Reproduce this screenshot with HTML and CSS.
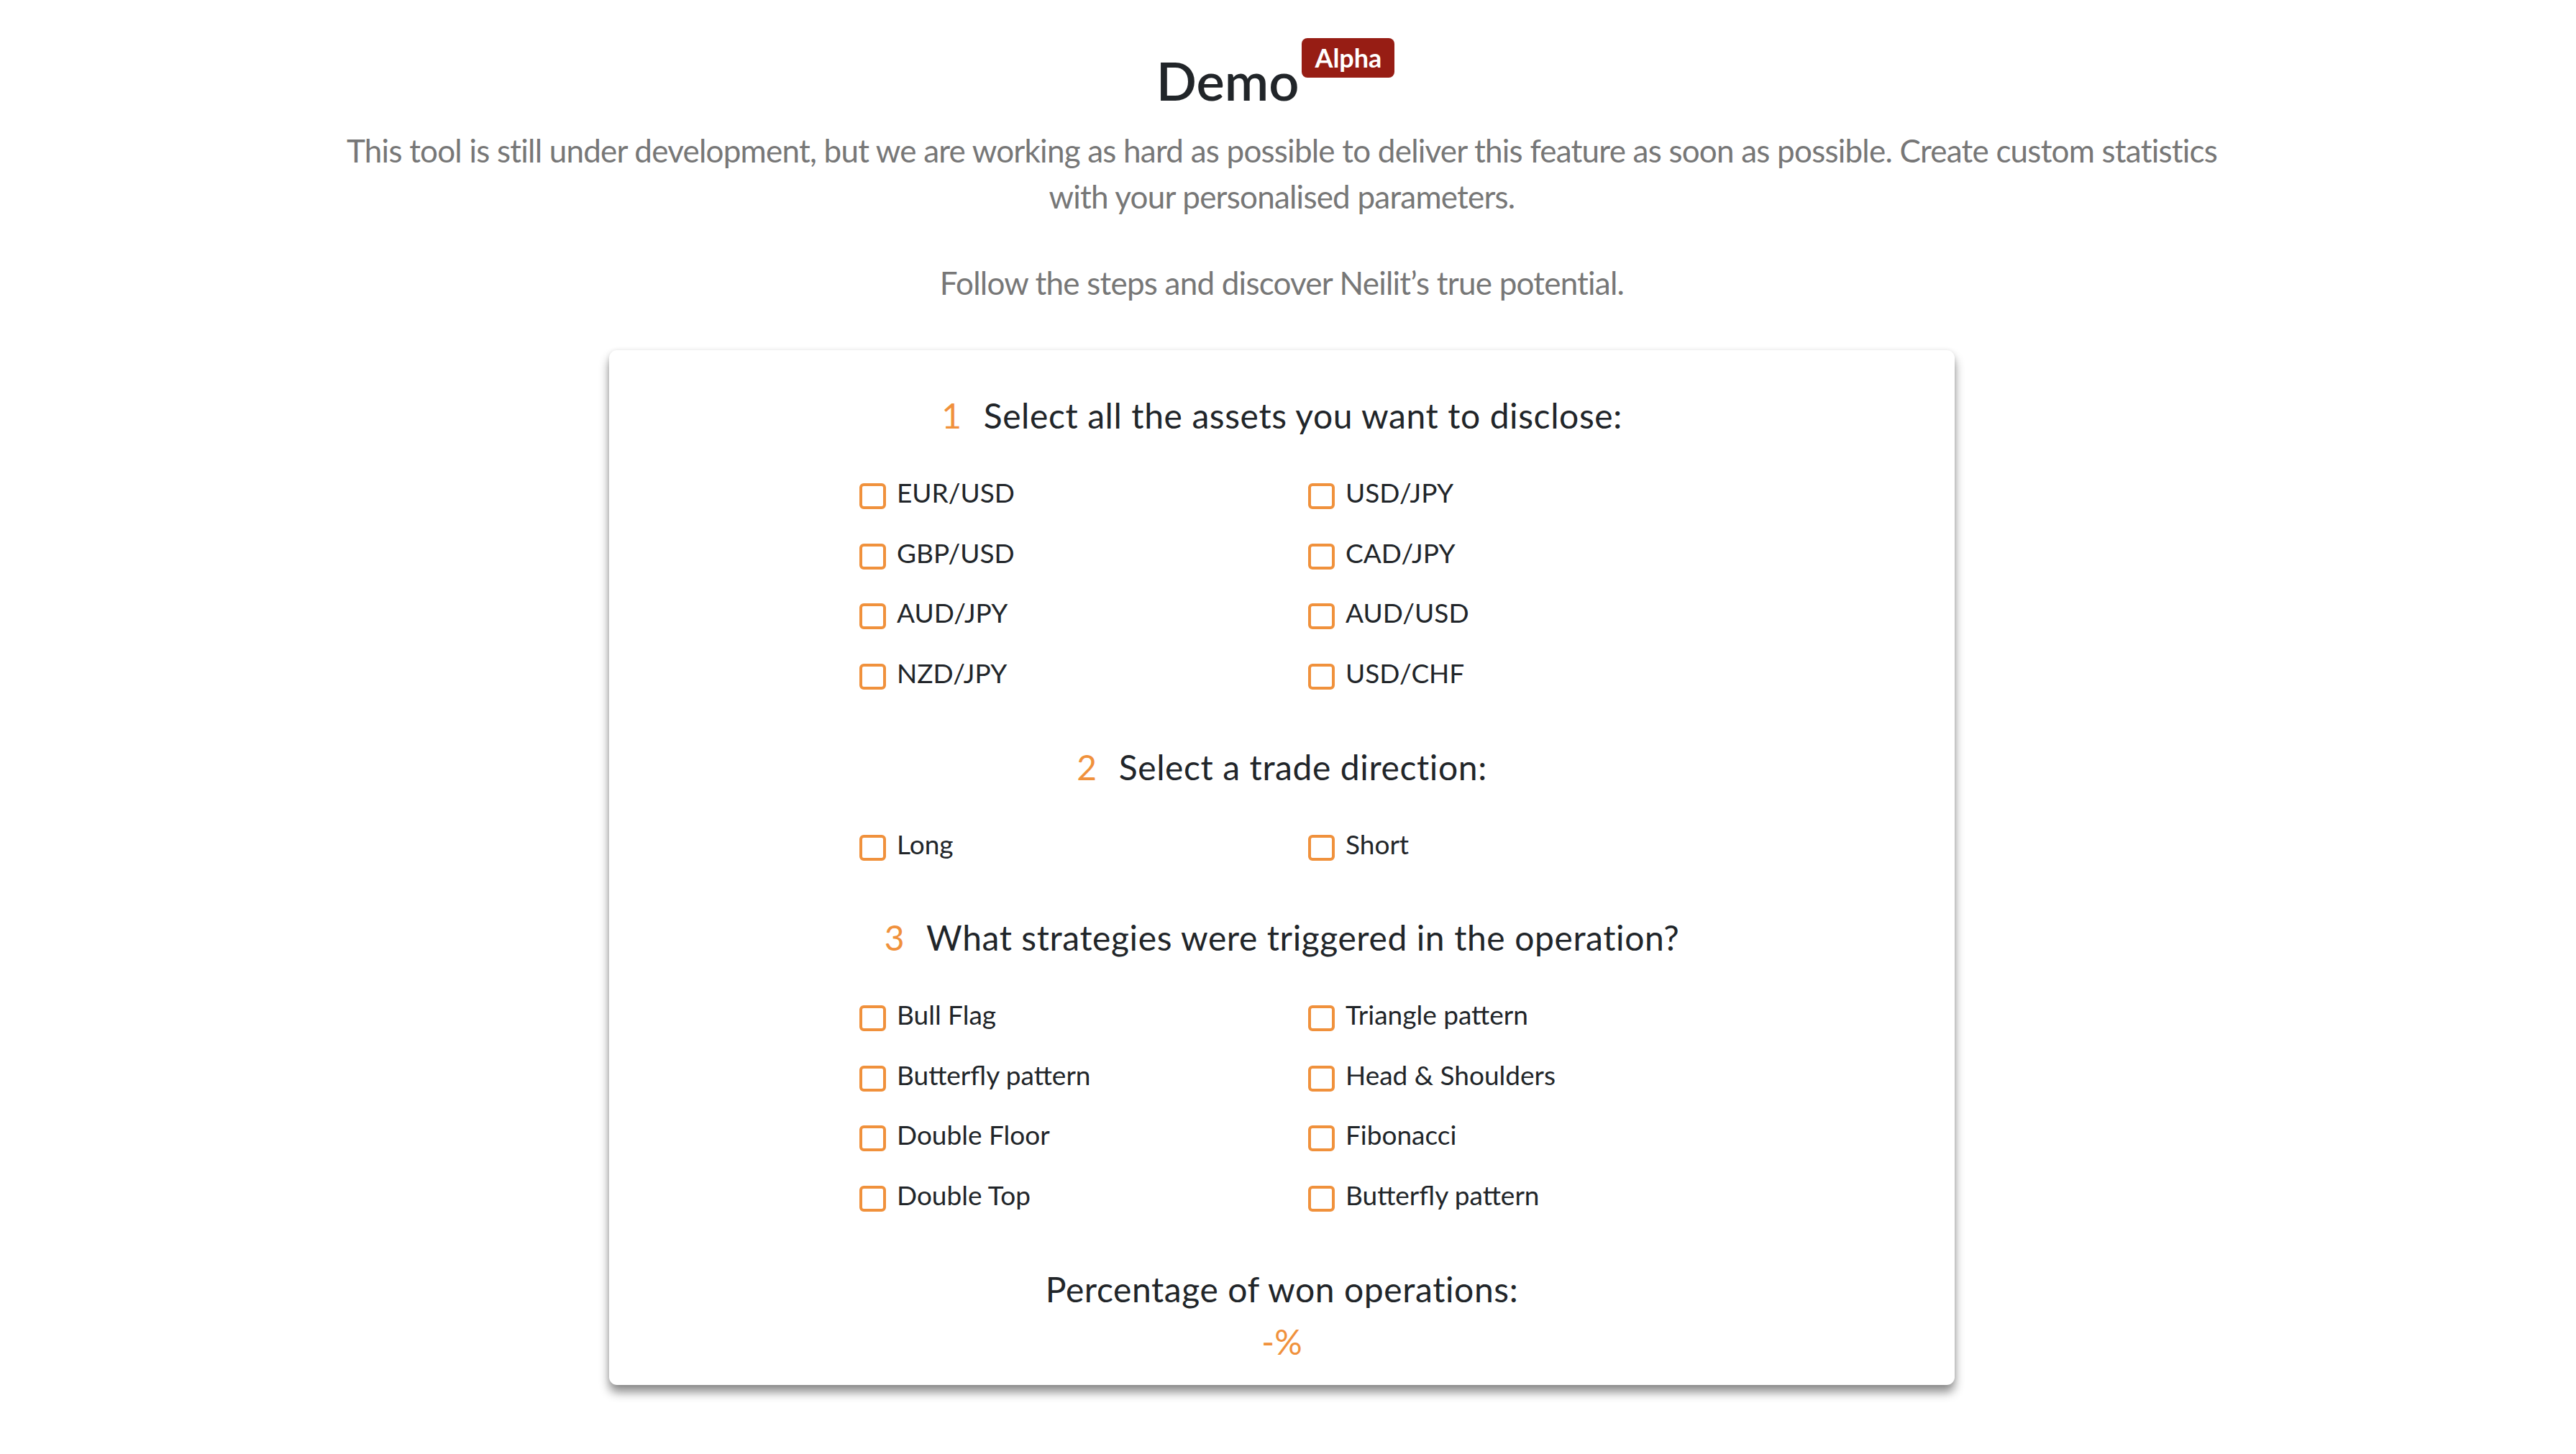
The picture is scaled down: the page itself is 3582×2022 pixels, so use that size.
FILE: index.html
```html
<!DOCTYPE html>
<html lang="en">
<head>
<meta charset="utf-8">
<title>Demo</title>
<link rel="stylesheet" href="styles.css">
</head>
<body>
<div class="page">
  <header class="intro">
    <h1 class="title"><span class="title-text">Demo</span><span class="badge">Alpha</span></h1>
    <p class="lead">This tool is still under development, but we are working as hard as possible to deliver this feature as soon as possible. Create custom statistics with your personalised parameters.</p>
    <p class="lead follow">Follow the steps and discover Neilit’s true potential.</p>
  </header>

  <main class="card">
    <section class="step">
      <h2 class="step-title"><span class="num">1</span>Select all the assets you want to disclose:</h2>
      <div class="options">
        <label class="opt"><span class="box"></span>EUR/USD</label>
        <label class="opt"><span class="box"></span>USD/JPY</label>
        <label class="opt"><span class="box"></span>GBP/USD</label>
        <label class="opt"><span class="box"></span>CAD/JPY</label>
        <label class="opt"><span class="box"></span>AUD/JPY</label>
        <label class="opt"><span class="box"></span>AUD/USD</label>
        <label class="opt"><span class="box"></span>NZD/JPY</label>
        <label class="opt"><span class="box"></span>USD/CHF</label>
      </div>
    </section>

    <section class="step">
      <h2 class="step-title"><span class="num">2</span>Select a trade direction:</h2>
      <div class="options">
        <label class="opt"><span class="box"></span>Long</label>
        <label class="opt"><span class="box"></span>Short</label>
      </div>
    </section>

    <section class="step">
      <h2 class="step-title"><span class="num">3</span>What strategies were triggered in the operation?</h2>
      <div class="options">
        <label class="opt"><span class="box"></span>Bull Flag</label>
        <label class="opt"><span class="box"></span>Triangle pattern</label>
        <label class="opt"><span class="box"></span>Butterfly pattern</label>
        <label class="opt"><span class="box"></span>Head &amp; Shoulders</label>
        <label class="opt"><span class="box"></span>Double Floor</label>
        <label class="opt"><span class="box"></span>Fibonacci</label>
        <label class="opt"><span class="box"></span>Double Top</label>
        <label class="opt"><span class="box"></span>Butterfly pattern</label>
      </div>
    </section>

    <section class="result">
      <h2 class="result-title">Percentage of won operations:</h2>
      <div class="result-value">-%</div>
    </section>
  </main>
</div>
</body>
</html>
```

FILE: styles.css
```css
html, body {
  margin: 0;
  padding: 0;
  background: #ffffff;
}

body {
  font-family: Lato, "Open Sans", "Liberation Sans", sans-serif;
  color: #212529;
}

.page {
  width: 3565px;
  padding-bottom: 90px;
  display: flex;
  flex-direction: column;
  align-items: center;
}

.intro {
  display: flex;
  flex-direction: column;
  align-items: center;
  padding-top: 67px;
}

.title {
  margin: 0;
  padding-right: 18px;
  display: flex;
  align-items: flex-start;
  font-size: 74px;
  font-weight: 600;
  line-height: 89px;
  color: #212529;
}

.badge {
  margin-top: -14px;
  margin-left: 4px;
  height: 55px;
  padding: 0 18px;
  border-radius: 8px;
  background: #971d14;
  color: #ffffff;
  font-size: 36px;
  font-weight: 700;
  line-height: 55px;
}

.lead {
  margin: 21px 0 0;
  width: 2650px;
  text-align: center;
  font-size: 44px;
  line-height: 64px;
  letter-spacing: -0.78px;
  color: #777777;
}

.lead.follow {
  margin-top: 56px;
}

.card {
  margin-top: 62px;
  width: 1871px;
  box-sizing: border-box;
  padding: 62px 0 31px;
  background: #ffffff;
  border-radius: 11px;
  box-shadow: 0 10px 14px rgba(0, 0, 0, 0.45), 0 0 6px rgba(0, 0, 0, 0.08);
  display: flex;
  flex-direction: column;
  gap: 73.5px;
}

.step {
  display: flex;
  flex-direction: column;
  gap: 50px;
}

.step-title,
.result-title {
  margin: 0;
  text-align: center;
  font-size: 48px;
  font-weight: 400;
  line-height: 58px;
  letter-spacing: 0.6px;
  color: #212529;
}

.num {
  color: #f0913c;
  margin-right: 30px;
}

.options {
  margin-left: 348px;
  display: grid;
  grid-template-columns: 624px 624px;
  row-gap: 27.7px;
}

.opt {
  display: flex;
  align-items: flex-start;
  font-size: 37px;
  line-height: 56px;
  color: #212529;
}

.box {
  flex: none;
  margin-top: 15px;
  margin-right: 15px;
  width: 37px;
  height: 36px;
  box-sizing: border-box;
  border: 4px solid #f0913c;
  border-radius: 6px;
}

.result {
  display: flex;
  flex-direction: column;
  gap: 15px;
}

.result-value {
  text-align: center;
  font-size: 48px;
  line-height: 58px;
  color: #f0913c;
}
```
